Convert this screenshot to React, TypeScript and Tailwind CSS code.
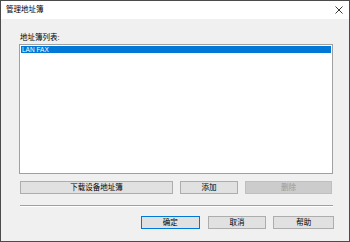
import React from 'react';

const FONT = { fontFamily: '"Liberation Sans", "Noto Sans CJK SC", sans-serif' };

function Btn({
  label,
  w,
  variant = 'normal',
}: {
  label: string;
  w: string;
  variant?: 'normal' | 'default' | 'disabled';
}) {
  const base = 'h-[13px] flex items-center justify-center text-[7.5px] leading-none border';
  const look =
    variant === 'disabled'
      ? 'bg-[#cccccc] border-[#bfbfbf] text-[#9a9a9a]'
      : variant === 'default'
        ? 'bg-[#e1e1e1] border-[#0078d7] text-black'
        : 'bg-[#e1e1e1] border-[#adadad] text-black';
  return <div className={`${base} ${look} ${w}`}>{label}</div>;
}

export default function App() {
  return (
    <div
      className="w-[350px] h-[242px] flex flex-col bg-[#f0f0f0] border border-[#4b4b4b] overflow-hidden"
      style={FONT}
    >
      <div className="h-[18px] bg-white flex items-center justify-between pl-[5px] pr-[5px] shrink-0">
        <span className="text-[7.5px] text-black leading-none">管理地址簿</span>
        <svg width="8" height="8" viewBox="0 0 8 8" className="mr-[1px]">
          <path d="M0.5 0.5L7.5 7.5M7.5 0.5L0.5 7.5" stroke="#222" strokeWidth="0.9" />
        </svg>
      </div>

      <div className="flex flex-col pl-[18px] pr-[15px]">
        <div className="mt-[14px] h-[10px] flex items-center text-[7.5px] text-black leading-none pl-[1px]">
          地址簿列表:
        </div>
        <div className="mt-[1px] w-[314px] h-[130px] bg-white border border-[#a0a0a0] p-[1px]">
          <div className="h-[7px] bg-[#0078d7] text-white text-[6.5px] leading-[7px] pl-[1px]">
            LAN FAX
          </div>
        </div>

        <div className="mt-[7px] flex items-center pl-[1px]">
          <Btn label="下载设备地址簿" w="w-[153px]" />
          <Btn label="添加" w="w-[58px] ml-[7px]" />
          <Btn label="删除" w="w-[87px] ml-[7px]" variant="disabled" />
        </div>

        <div className="mt-[11px] ml-[1px] w-[313px] h-[2px] border-t border-[#a0a0a0] border-b border-b-white" />

        <div className="mt-[9px] flex items-center pl-[122px]">
          <Btn label="确定" w="w-[60px]" variant="default" />
          <Btn label="取消" w="w-[60px] ml-[8px]" />
          <Btn label="帮助" w="w-[62px] ml-[7px]" />
        </div>
      </div>
    </div>
  );
}
